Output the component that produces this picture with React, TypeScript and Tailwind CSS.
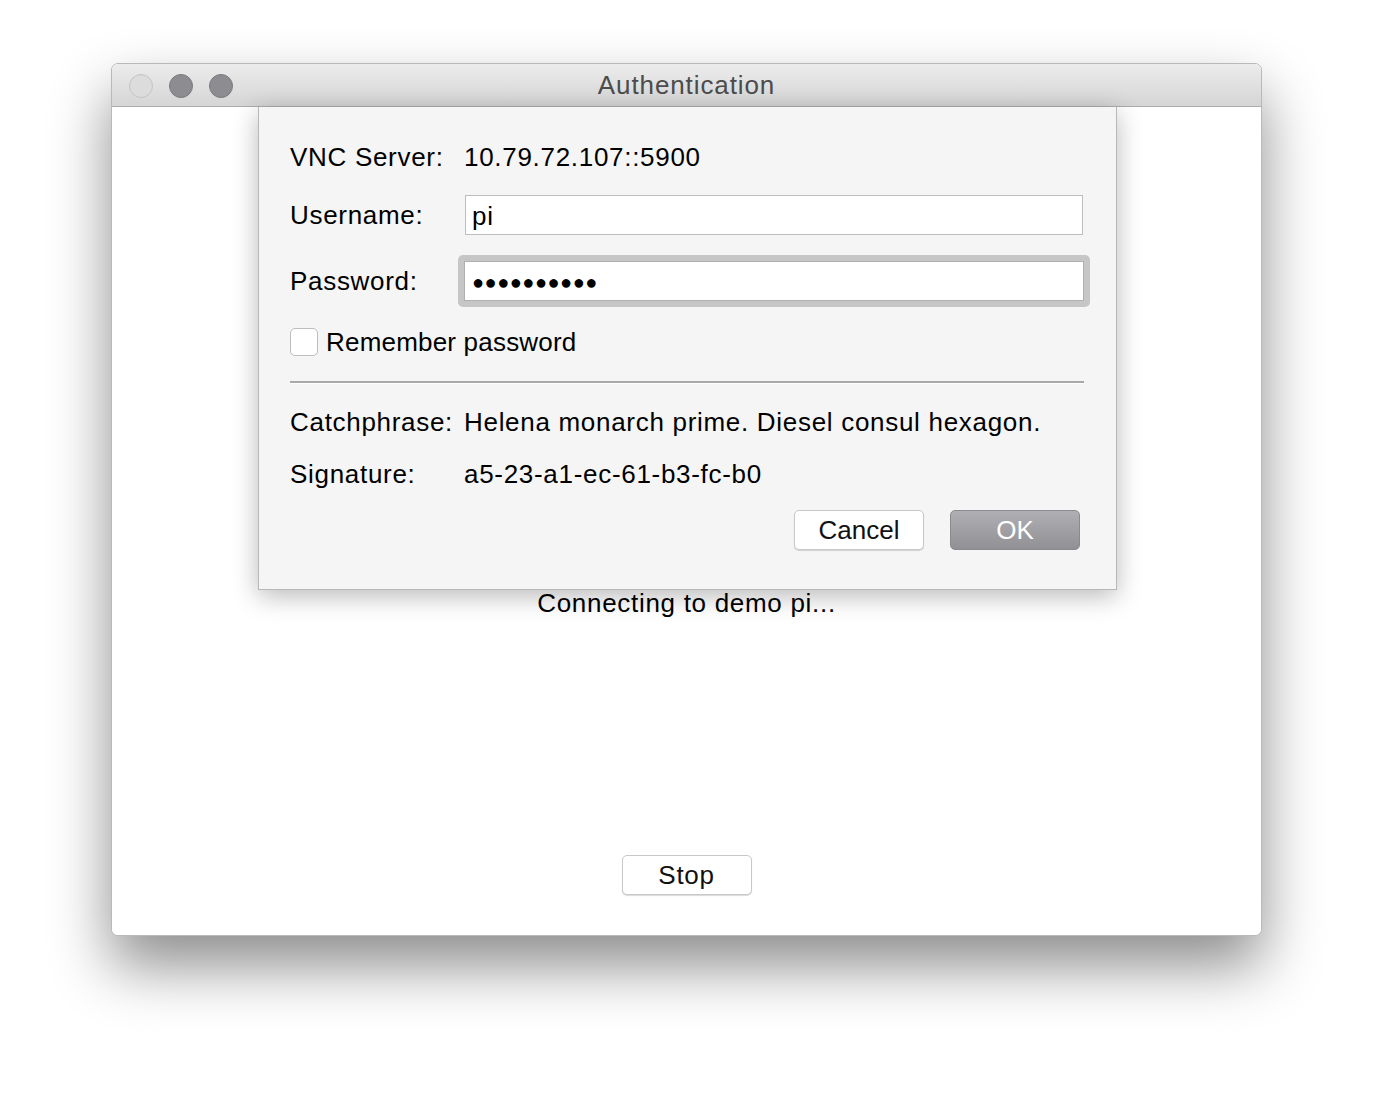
import React from 'react';

const font = { fontFamily: '"Liberation Sans", Arial, sans-serif' };

function TrafficLights() {
    return (
        <div className="absolute left-[17px] top-[10px] flex items-center gap-4">
            <span className="h-6 w-6 rounded-full border border-[#c4c4c4] bg-[#dcdcdc]" />
            <span className="h-6 w-6 rounded-full border border-[#7a7a7e] bg-[#8d8d91]" />
            <span className="h-6 w-6 rounded-full border border-[#7a7a7e] bg-[#8d8d91]" />
        </div>
    );
}

function FieldRow({ label, children }: { label: string; children: React.ReactNode }) {
    return (
        <div className="grid h-[40px] grid-cols-[174px_1fr] items-center">
            <span>{label}</span>
            {children}
        </div>
    );
}

function MacButton({ children, primary }: { children: React.ReactNode; primary?: boolean }) {
    return (
        <button
            className={
                primary
                    ? 'h-[40px] w-[130px] rounded-[5px] border border-[#8a8a8e] bg-gradient-to-b from-[#b0b0b4] to-[#909095] text-[26px] leading-none text-white'
                    : 'h-[40px] w-[130px] rounded-[5px] border border-[#c8c8c8] bg-white text-[26px] leading-none text-[#111] shadow-[0_1px_1px_rgba(0,0,0,0.15)]'
            }
        >
            {children}
        </button>
    );
}

function AuthSheet() {
    return (
        <div className="absolute left-[146px] top-0 flex h-[483px] w-[859px] flex-col border-x border-b border-[#b8b8b8] bg-[#f5f5f5] pl-[31px] pr-[34px] pt-[30px] text-[26px] leading-none tracking-[0.7px] text-black shadow-[0_6px_24px_rgba(0,0,0,0.28)]">
            <FieldRow label="VNC Server:">
                <span>10.79.72.107::5900</span>
            </FieldRow>
            <div className="mt-[18px]">
                <FieldRow label="Username:">
                    <div className="ml-px flex h-[40px] w-[618px] items-center border border-[#bdbdbd] bg-white px-[6px] pt-[2px]">
                        pi
                    </div>
                </FieldRow>
            </div>
            <div className="mt-[20px] grid h-[52px] grid-cols-[174px_1fr] items-center">
                <span>Password:</span>
                <div className="-ml-[6px] w-[632px] rounded-[5px] bg-[#c6c6c6] p-[6px]">
                    <div className="flex h-[40px] items-center border border-[#b0b0b0] bg-white px-[7px] pt-[2px] text-[20px] tracking-[0.5px]">
                        ●●●●●●●●●●
                    </div>
                </div>
            </div>
            <label className="mt-[21px] flex h-[28px] items-center gap-[8px] tracking-[0.2px]">
                <span className="h-[28px] w-[28px] rounded-[5px] border border-[#bdbdbd] bg-white" />
                <span>Remember password</span>
            </label>
            <div className="mt-[25px] h-[2px] w-[794px] border-t-2 border-[#a9a9a9] shadow-[0_1px_0_#ffffff]" />
            <div className="mt-[19px] flex flex-col gap-[12px]">
                <FieldRow label="Catchphrase:">
                    <span>Helena monarch prime. Diesel consul hexagon.</span>
                </FieldRow>
                <FieldRow label="Signature:">
                    <span>a5-23-a1-ec-61-b3-fc-b0</span>
                </FieldRow>
            </div>
            <div className="mt-[16px] flex justify-end gap-[26px] pr-[2px] tracking-normal">
                <MacButton>Cancel</MacButton>
                <MacButton primary>OK</MacButton>
            </div>
        </div>
    );
}

export default function App() {
    return (
        <div className="min-h-[1096px] bg-white pl-[111px] pt-[63px]" style={font}>
            <div className="flex h-[873px] w-[1151px] flex-col overflow-hidden rounded-[7px] border border-[#b9b9b9] bg-white shadow-[0_30px_60px_rgba(0,0,0,0.45)]">
                <div className="relative flex h-[43px] shrink-0 items-center justify-center border-b border-[#adadad] bg-gradient-to-b from-[#ececec] to-[#d5d5d5]">
                    <TrafficLights />
                    <span className="text-[26px] leading-none tracking-[0.9px] text-[#4c4c4c]">Authentication</span>
                </div>
                <div className="relative flex flex-1 flex-col items-center bg-white">
                    <AuthSheet />
                    <div className="mt-[481px] text-[26px] leading-[30px] tracking-[0.7px] text-black">
                        Connecting to demo pi...
                    </div>
                    <button className="mt-[237px] h-[40px] w-[130px] rounded-[5px] border border-[#c8c8c8] bg-white text-[26px] leading-none tracking-[0.7px] text-[#111] shadow-[0_1px_1px_rgba(0,0,0,0.15)]">
                        Stop
                    </button>
                </div>
            </div>
        </div>
    );
}
